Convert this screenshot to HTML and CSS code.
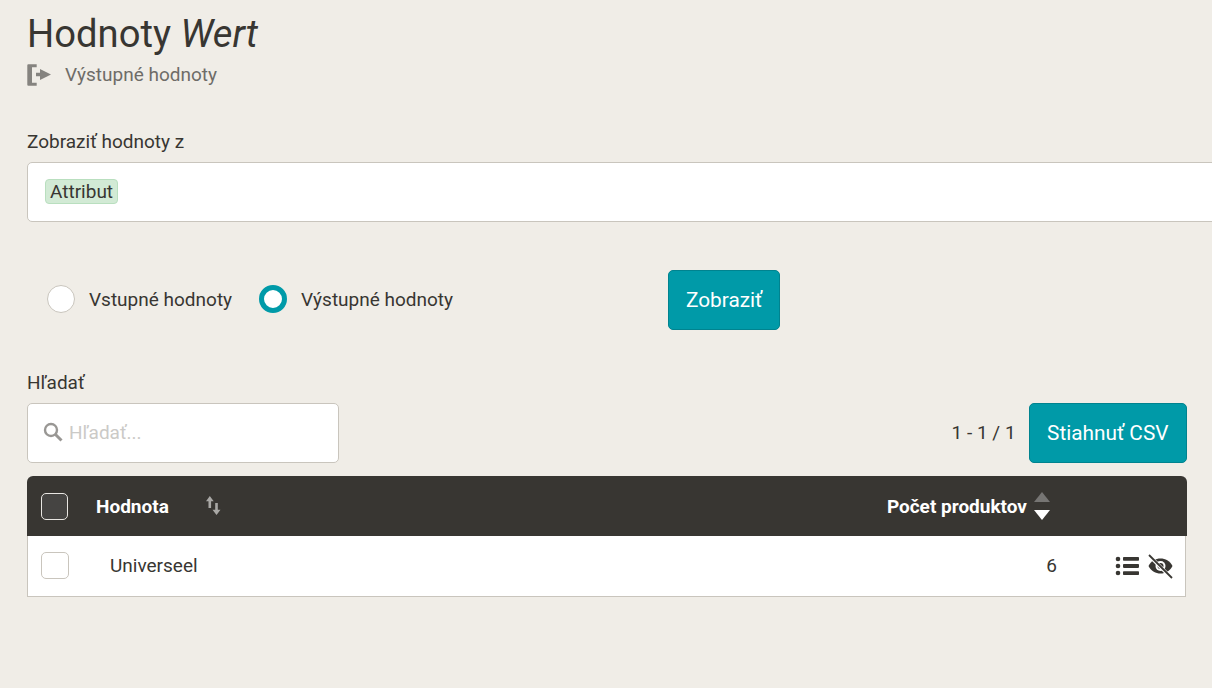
FILE: index.html
```html
<!DOCTYPE html>
<html lang="sk">
<head>
<meta charset="utf-8">
<title>Hodnoty Wert</title>
<link rel="stylesheet" href="styles.css">
</head>
<body>
<main class="page">
  <h1 class="title">Hodnoty <em>Wert</em></h1>
  <div class="subtitle">
    <svg class="exit-icon" width="25" height="24" viewBox="0 0 25 24"><path d="M.3 2.300a1 1 0 0 1 1-1H9.700v3H5v15.400h4.700v3H1.300a1 1 0 0 1-1-1z" fill="#85837f"/><path d="M9 9.800h4V6l11 5.500L13 17v-3.800H9z" fill="#85837f"/></svg>
    <span>Výstupné hodnoty</span>
  </div>

  <label class="field-label label-from">Zobraziť hodnoty z</label>
  <div class="tag-input"><span class="tag">Attribut</span></div>

  <div class="filter-row">
    <div class="radios">
      <label class="radio"><span class="dot"></span>Vstupné hodnoty</label>
      <label class="radio"><span class="dot dot-on"></span>Výstupné hodnoty</label>
    </div>
    <button class="btn btn-show">Zobraziť</button>
  </div>

  <label class="field-label label-search">Hľadať</label>
  <div class="toolbar">
    <div class="search">
      <svg width="20" height="20" viewBox="0 0 20 20"><circle cx="8" cy="8" r="6" fill="none" stroke="#999794" stroke-width="2.400"/><path d="M12.500 12.500l6 6" stroke="#999794" stroke-width="3" fill="none"/></svg>
      <span>Hľadať...</span>
    </div>
    <div class="pager">
      <span>1 - 1 / 1</span>
      <button class="btn">Stiahnuť CSV</button>
    </div>
  </div>

  <div class="table">
    <div class="thead">
      <span class="check check-dark"></span>
      <span class="th-value">Hodnota</span>
      <svg class="sort-icon" width="16" height="20" viewBox="0 0 16 20"><path d="M3.800 0L0 5.200h2.500V12h2.600V5.200h2.600z M10.500 19l4-5.200h-2.700V7h-2.600v6.800H6.500z" fill="#a9a8a5"/></svg>
      <span class="th-count">Počet produktov</span>
      <svg class="sort-arrows" width="16" height="28" viewBox="0 0 16 28"><path d="M8 0l8 10H0z" fill="#767573"/><path d="M0 18h16l-8 10z" fill="#fff"/></svg>
    </div>
    <div class="row">
      <span class="check"></span>
      <span class="td-value">Universeel</span>
      <span class="td-count">6</span>
      <svg class="list-icon" width="24" height="20" viewBox="0 0 24 20"><g fill="#383632"><circle cx="3" cy="3" r="2.300"/><circle cx="3" cy="10" r="2.300"/><circle cx="3" cy="17" r="2.300"/><rect x="8" y="1" width="16" height="3.800" rx=".8"/><rect x="8" y="8.100" width="16" height="3.800" rx=".8"/><rect x="8" y="15.200" width="16" height="3.800" rx=".8"/></g></svg>
      <svg class="eye-icon" width="25" height="26" viewBox="0 0 25 26"><path d="M.5 13C3.500 7.500 7.500 5.500 12.500 5.500S21.500 7.500 24.500 13c-3 5.500-7 7.500-12 7.500S3.500 18.500.5 13z" fill="#383632"/><circle cx="12.500" cy="13" r="5" fill="#fff"/><circle cx="12.500" cy="13" r="3" fill="#383632"/><path d="M1 2.500l22 22" stroke="#fff" stroke-width="3.500"/><path d="M1 2l23 23" stroke="#383632" stroke-width="1.800"/></svg>
    </div>
  </div>
</main>
</body>
</html>
```
FILE: styles.css
```css
* { box-sizing: border-box; }
html, body { margin: 0; height: 100%; overflow: hidden; }
body {
  background: #f0ede7;
  color: #383632;
  font-family: Roboto, "Liberation Sans", sans-serif;
  font-size: 19px;
}
.page { width: 1187px; margin-left: 27px; padding-top: 12px; }
.title { margin: 0; font-size: 38.200px; font-weight: 400; line-height: 44px; }
.subtitle {
  display: flex;
  align-items: center;
  gap: 13px;
  margin-top: 7px;
  color: #6e6c68;
  line-height: 24px;
}
.exit-icon { display: block; }
.field-label { display: block; line-height: 22px; }
.label-from { margin-top: 44px; }
.tag-input {
  display: flex;
  align-items: center;
  width: 1300px;
  height: 60px;
  margin-top: 9px;
  padding: 0 0 2px 17px;
  background: #fff;
  border: 1px solid #c9c5bd;
  border-radius: 5px;
}
.tag {
  height: 25px;
  padding: 0 4px;
  line-height: 23px;
  background: #d2ead5;
  border: 1px solid #b9dfbf;
  border-radius: 4px;
}
.filter-row { display: flex; align-items: center; margin-top: 48px; height: 60px; }
.radios { display: flex; gap: 27px; margin: 0 0 2px 20px; width: 621px; }
.radio { display: flex; align-items: center; gap: 14px; }
.dot {
  width: 28px;
  height: 28px;
  background: #fff;
  border: 1px solid #c9c5bd;
  border-radius: 50%;
}
.dot-on { border: 5px solid #009aa8; }
.btn {
  height: 60px;
  padding: 0 17px;
  font: inherit;
  font-size: 20.800px;
  color: #fff;
  background: #009aa8;
  border: 1px solid #00838f;
  border-radius: 5px;
}
.label-search { margin-top: 42px; }
.toolbar {
  display: flex;
  justify-content: space-between;
  align-items: center;
  width: 1160px;
  margin-top: 9px;
}
.search {
  display: flex;
  align-items: center;
  gap: 6px;
  width: 312px;
  height: 60px;
  padding: 0 0 2px 15px;
  background: #fff;
  border: 1px solid #c9c5bd;
  border-radius: 5px;
  color: #cbcac7;
}
.pager { display: flex; align-items: center; gap: 13px; }
.pager span { margin-bottom: 2px; }
.pager .btn { padding: 0 17.500px; }
.table { width: 1160px; margin-top: 13px; }
.thead {
  display: flex;
  align-items: center;
  height: 60px;
  padding-left: 14px;
  background: #383632;
  border-radius: 6px 6px 0 0;
  color: #fff;
  font-weight: 700;
}
.check {
  flex: none;
  width: 28px;
  height: 27px;
  background: #fff;
  border: 1px solid #c9c5bd;
  border-radius: 5px;
}
.check-dark { width: 27px; background: #454442; border-color: #e8e6e2; }
.th-value { margin-left: 28px; }
.sort-icon { margin-left: 37px; }
.th-count { margin-left: auto; }
.sort-arrows { margin: 0 137px 0 7px; }
.row {
  display: flex;
  align-items: center;
  height: 61px;
  margin-right: 1px;
  padding: 0 0 1px 13px;
  background: #fff;
  border: 1px solid #c9c5bd;
  border-top: 0;
}
.td-value { margin: 0 0 1px 41px; }
.td-count { margin: 0 0 1px auto; }
.list-icon { margin-left: 58px; }
.eye-icon { margin: 0 12px 0 9px; }
```
